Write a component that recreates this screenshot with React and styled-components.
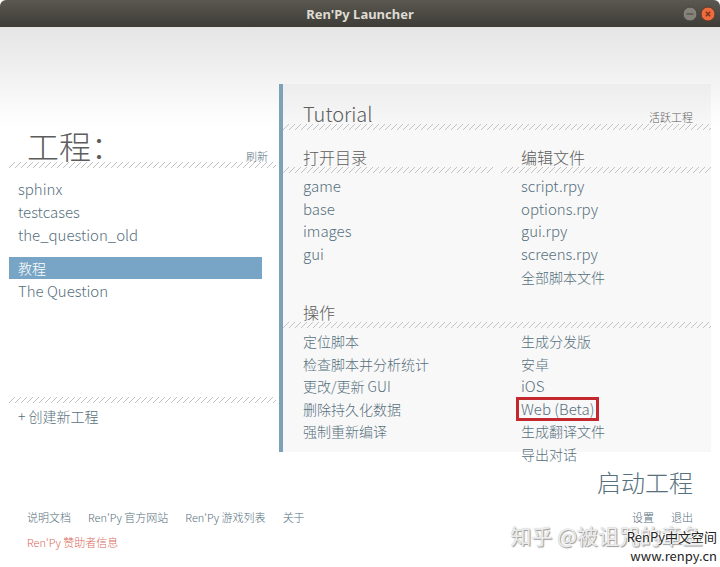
import React, { useState } from 'react'
import styled, { createGlobalStyle } from 'styled-components'

const GlobalStyle = createGlobalStyle`
* {
box-sizing: border-box;
}
body {
margin: 0;
background: #fff;
font-family: "Noto Sans CJK SC", sans-serif;
font-weight: 300;
}
`

const Window = styled.div`
position: relative;
min-height: 100vh;
background: linear-gradient(#e5e5e5, #fff 100px) 0 27px no-repeat;
`
const TitleBar = styled.header`
display: grid;
grid-template-columns: 1fr auto 1fr;
align-items: center;
height: 27px;
padding: 0 4px;
background: linear-gradient(#5a5850, #3d3c37);
border-radius: 6px 6px 0 0;
`
const Title = styled.h1`
grid-column: 2;
margin: 0;
font-family: "Noto Sans", sans-serif;
font-weight: bold;
font-size: 13px;
line-height: 18px;
color: #dfdbd2;
`
const WindowButtons = styled.div`
display: flex;
justify-content: flex-end;
gap: 2px;
`
const RoundButton = styled.button`
display: block;
width: 16px;
height: 16px;
padding: 0;
border: none;
background: none;
`
const Main = styled.main`
display: grid;
grid-template-columns: 270px 1fr;
padding: 57px 9px 0 9px;
`
const Projects = styled.section`
display: flex;
flex-direction: column;
padding-right: 3px;
`
const ProjectsTop = styled.div`
display: flex;
justify-content: space-between;
align-items: flex-end;
height: 78px;
padding: 0 8px 0 18px;
`
const ProjectsTitle = styled.h2`
margin: 0;
font-weight: 300;
font-size: 32px;
line-height: 34px;
color: #5c5c5c;
`
const Hatch = styled.div`
height: 6px;
background: linear-gradient(135deg, transparent 42%, #c2c2c2 42%, #c2c2c2 58%, transparent 58%) 0 0 / 6px 6px;
`
const ProjectList = styled.div`
display: flex;
flex-direction: column;
flex: 1;
padding: 9px 14px 0 0;
`
const Project = styled.button`
height: ${p => p.$selected ? '22px' : '23px'};
margin-top: ${p => p.$selected ? '11px' : '0'};
padding: 0 9px;
border: none;
font: inherit;
font-size: ${p => p.$size}px;
line-height: 22px;
text-align: left;
color: ${p => p.$selected ? '#fff' : '#56707d'};
background: ${p => p.$selected ? '#78a5c5' : 'none'};
cursor: pointer;
`
const Create = styled.div`
height: 49px;
padding: 0 9px;
`
const Details = styled.section`
border-left: 4px solid #7ba2b7;
background: rgba(0, 0, 0, 0.027);
`
const DetailsTop = styled.div`
display: flex;
justify-content: space-between;
align-items: flex-end;
height: 40px;
padding: 0 18px 0 20px;
`
const DetailsTitle = styled.h2`
margin: 0;
font-weight: 300;
font-size: 20px;
line-height: 20px;
color: #5c5c5c;
`
const Columns = styled.div`
display: grid;
grid-template-columns: 1fr 1fr;
gap: 8px;
`
const Heading = styled.h3`
height: ${p => p.$tall ? '34px' : '37px'};
margin: 0;
padding: ${p => p.$tall ? '14px' : '17px'} 20px 0;
font-weight: 300;
font-size: 16px;
line-height: 20px;
color: #5c5c5c;
`
const Links = styled.div`
display: grid;
grid-template-rows: repeat(${p => p.$rows}, 1fr);
align-items: center;
justify-items: start;
height: ${p => p.$rows === 5 ? '113px' : '135px'};
margin-top: 2px;
padding: 0 20px;
`
const Actions = styled(Columns)`
/* the longest column runs past the panel */
margin-bottom: -13px;
`
const Action = styled.button`
position: relative;
padding: 0;
border: none;
background: none;
font: inherit;
font-size: ${p => p.$size || 14}px;
line-height: ${p => p.$line || 22}px;
white-space: nowrap;
color: ${p => p.$color || '#56707d'};
cursor: pointer;
`
const Marked = styled(Action)`
&::after {
content: '';
position: absolute;
inset: -1px -5px;
border: 3px solid #c4282f;
}
`
const Footer = styled.footer`
display: grid;
grid-template-columns: 1fr auto;
padding: 12px 27px 0 27px;
`
const Launch = styled.div`
grid-column: 2;
display: flex;
justify-content: flex-end;
`
const FooterLinks = styled.nav`
display: flex;
justify-content: ${p => p.$end ? 'flex-end' : 'flex-start'};
gap: 17px;
padding-top: 9px;
`
const FooterLink = styled.a`
font-size: 11px;
line-height: 16px;
white-space: nowrap;
text-decoration: none;
color: ${p => p.$sponsor ? '#d96a5c' : '#56707d'};
`
const Watermark = styled.div`
position: absolute;
right: 17px;
bottom: 17px;
font-weight: 400;
font-size: 21px;
line-height: 30px;
color: rgba(255, 255, 255, 0.8);
text-shadow: 1px 1px 1px #999, 0 0 1px #aaa;
pointer-events: none;
`
const SiteMark = styled.div`
position: absolute;
right: 3px;
bottom: 2px;
font-weight: 400;
font-size: 13px;
line-height: 19px;
text-align: right;
color: #222;
text-shadow: -1px -1px 0 #fff, 1px 0 0 #fff;
pointer-events: none;
`

const projects = ['sphinx', 'testcases', 'the_question_old', '教程', 'The Question']
const directories = ['game', 'base', 'images', 'gui']
const files = ['script.rpy', 'options.rpy', 'gui.rpy', 'screens.rpy', '全部脚本文件']
const projectActions = ['定位脚本', '检查脚本并分析统计', '更改/更新 GUI', '删除持久化数据', '强制重新编译']
const buildActions = ['生成分发版', '安卓', 'iOS', 'Web (Beta)', '生成翻译文件', '导出对话']
const pages = ['说明文档', "Ren'Py 官方网站", "Ren'Py 游戏列表", '关于']

// latin names are set one size up from the chinese ones
const textSize = text => /^[\x20-\x7e]+$/.test(text) ? 15 : 14

const LinkList = ({ items, rows }) => (
    <Links $rows={rows}>
        {items.map(item => item === 'Web (Beta)'
            ? <Marked key={item} $size={textSize(item)}>{item}</Marked>
            : <Action key={item} $size={textSize(item)}>{item}</Action>)}
    </Links>
)

const App = () => {
    const [selected, setSelected] = useState('教程')

    return (
        <Window>
            <GlobalStyle />
            <TitleBar>
                <Title>Ren'Py Launcher</Title>
                <WindowButtons>
                    <RoundButton aria-label="Minimize">
                        <svg width="16" height="16" viewBox="0 0 16 16">
                            <circle cx="8" cy="8" r="7" fill="#85827a" stroke="#45443e" />
                            <path d="M4.5 8h7" stroke="#55534c" strokeWidth="1.4" />
                        </svg>
                    </RoundButton>
                    <RoundButton aria-label="Close">
                        <svg width="16" height="16" viewBox="0 0 16 16">
                            <circle cx="8" cy="8" r="7" fill="#ee6b3d" stroke="#5a3a2c" />
                            <path d="M5.8 5.8l4.4 4.4M10.2 5.8l-4.4 4.4" stroke="#7a3218" strokeWidth="1.4" />
                        </svg>
                    </RoundButton>
                </WindowButtons>
            </TitleBar>

            <Main>
                <Projects>
                    <ProjectsTop>
                        <ProjectsTitle>工程：</ProjectsTitle>
                        <Action $size={11} $line={12}>刷新</Action>
                    </ProjectsTop>
                    <Hatch />
                    <ProjectList>
                        {projects.map(name => (
                            <Project key={name} $size={textSize(name)} $selected={name === selected} onClick={() => setSelected(name)}>{name}</Project>
                        ))}
                    </ProjectList>
                    <Hatch />
                    <Create><Action>+ 创建新工程</Action></Create>
                </Projects>

                <Details>
                    <DetailsTop>
                        <DetailsTitle>Tutorial</DetailsTitle>
                        <Action $size={11} $line={14} $color="#5c5c5c">活跃工程</Action>
                    </DetailsTop>
                    <Hatch />
                    <Columns>
                        <div>
                            <Heading>打开目录</Heading>
                            <Hatch />
                            <LinkList items={directories} rows={5} />
                        </div>
                        <div>
                            <Heading>编辑文件</Heading>
                            <Hatch />
                            <LinkList items={files} rows={5} />
                        </div>
                    </Columns>
                    <Heading $tall>操作</Heading>
                    <Hatch />
                    <Actions>
                        <LinkList items={projectActions} rows={6} />
                        <LinkList items={buildActions} rows={6} />
                    </Actions>
                </Details>
            </Main>

            <Footer>
                <Launch><Action $size={24} $line={36}>启动工程</Action></Launch>
                <FooterLinks>
                    {pages.map(page => <FooterLink key={page} href="#">{page}</FooterLink>)}
                </FooterLinks>
                <FooterLinks $end>
                    <FooterLink href="#">设置</FooterLink>
                    <FooterLink href="#">退出</FooterLink>
                </FooterLinks>
                <FooterLinks>
                    <FooterLink href="#" $sponsor>Ren'Py 赞助者信息</FooterLink>
                </FooterLinks>
            </Footer>

            <Watermark>知乎 @被诅咒的章鱼</Watermark>
            <SiteMark>RenPy中文空间<br />www.renpy.cn</SiteMark>
        </Window>
    )
}

export default App
